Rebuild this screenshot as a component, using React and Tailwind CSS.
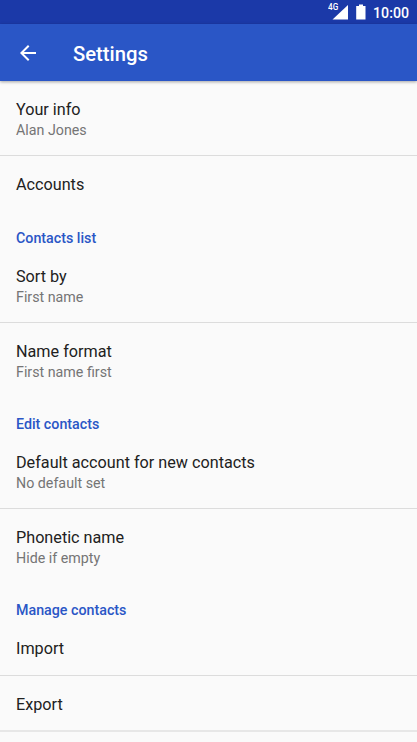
const sections = [
  {
    items: [
      { title: "Your info", subtitle: "Alan Jones" },
      { title: "Accounts" },
    ],
  },
  {
    heading: "Contacts list",
    items: [
      { title: "Sort by", subtitle: "First name" },
      { title: "Name format", subtitle: "First name first" },
    ],
  },
  {
    heading: "Edit contacts",
    items: [
      { title: "Default account for new contacts", subtitle: "No default set" },
      { title: "Phonetic name", subtitle: "Hide if empty" },
    ],
  },
  {
    heading: "Manage contacts",
    items: [{ title: "Import" }, { title: "Export" }],
  },
];

function StatusBar() {
  return (
    <div className="flex h-6 items-center justify-end bg-[#1b39a8] pr-2 text-white">
      <svg className="h-6 w-5" viewBox="0 0 20 24" fill="currentColor">
        <text x="0" y="10" fontSize="8.2" fontWeight="500" fontFamily="Roboto, sans-serif">4G</text>
        <path d="M20 5V19.500H4.500z" />
      </svg>
      <svg className="ml-2 h-6 w-[10px]" viewBox="0 0 10 24" fill="currentColor">
        <path d="M3 4.500h4v1.500H9.500V19.500H0.200V6H3z" />
      </svg>
      <span className="ml-[7px] pt-[3px] text-[14.170px] font-medium leading-[21px]">10:00</span>
    </div>
  );
}

function SettingRow({ title, subtitle }) {
  return (
    <div className="px-4 pt-[18px] pb-[15px]">
      <div className="text-[16.200px] leading-[22px] text-[#212121]">{title}</div>
      {subtitle && <div className="text-[14.250px] leading-[19px] text-[#757575]">{subtitle}</div>}
    </div>
  );
}

export default function App() {
  return (
    <div className="h-[742px] overflow-hidden bg-[#fafafa] font-['Roboto',sans-serif]">
      <StatusBar />
      <header className="relative flex h-[57px] items-center bg-[#2a56c6] px-4 text-white shadow-[0_1px_3px_rgba(0,0,0,0.35)]">
        <svg className="h-6 w-6" viewBox="0 0 24 24" fill="currentColor">
          <path d="M20 11H7.830l5.590-5.590L12 4l-8 8 8 8 1.410-1.410L7.830 13H20z" />
        </svg>
        <h1 className="ml-[33px] pt-[3px] text-[20.250px] font-medium">Settings</h1>
      </header>

      <main>
        {sections.map((section, i) => (
          <section key={i}>
            {section.heading && (
              <h2 className="px-4 pt-[17px] text-[14.250px] font-medium leading-5 text-[#2a56c6]">
                {section.heading}
              </h2>
            )}
            <div className="divide-y divide-[#dcdcdc]">
              {section.items.map((item) => (
                <SettingRow key={item.title} {...item} />
              ))}
            </div>
          </section>
        ))}
        <hr className="-mt-px border-t-2 border-[#e7e7e7]" />
      </main>
    </div>
  );
}
